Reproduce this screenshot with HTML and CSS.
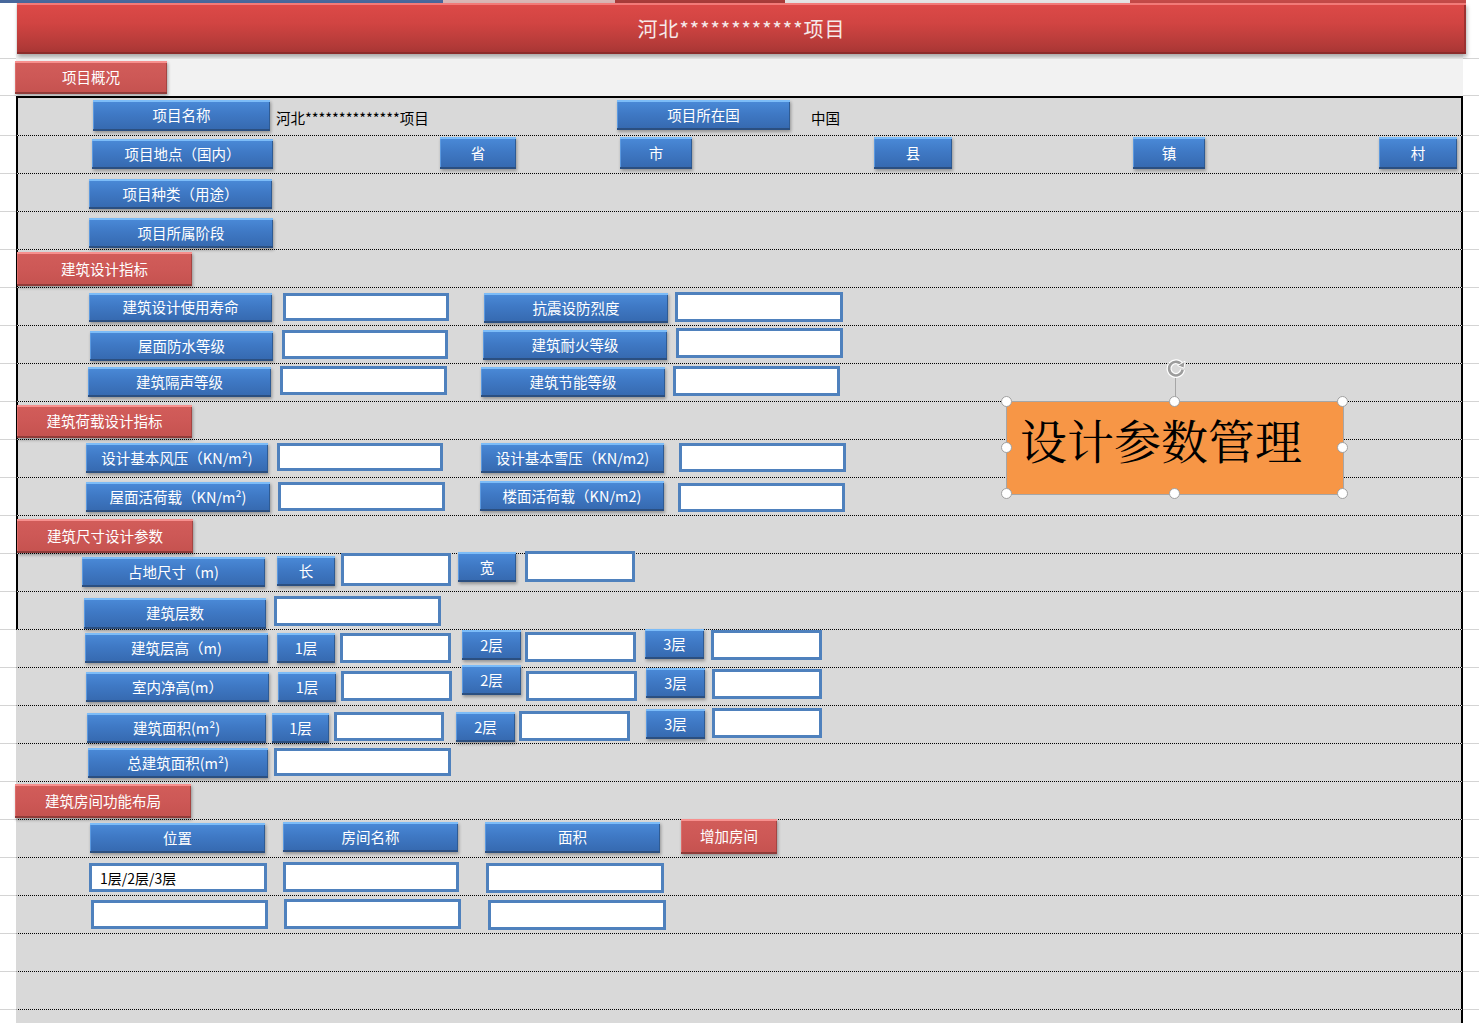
FILE: index.html
```html
<!DOCTYPE html>
<html lang="zh-CN">
<head>
<meta charset="utf-8">
<title>河北项目 设计参数</title>
<link rel="stylesheet" href="styles.css">
</head>
<body>
<div class="sheet">
  <div class="row hdr">
    <div class="cells">
      <div class="strip"></div>
      <div class="hdr-bar">河北************项目</div>
    </div>
  </div>
  <div class="row light r0">
    <div class="cells"><div class="sec">项目概况</div></div>
  </div>

  <div class="row framed first r1">
    <div class="cells">
      <div class="btn">项目名称</div>
      <div class="txt">河北**************项目</div>
      <div class="btn">项目所在国</div>
      <div class="txt">中国</div>
    </div>
  </div>
  <div class="row framed r2">
    <div class="cells">
      <div class="btn">项目地点（国内）</div>
      <div class="btn">省</div>
      <div class="btn">市</div>
      <div class="btn">县</div>
      <div class="btn">镇</div>
      <div class="btn">村</div>
    </div>
  </div>
  <div class="row framed r3"><div class="cells"><div class="btn">项目种类（用途）</div></div></div>
  <div class="row framed r4"><div class="cells"><div class="btn">项目所属阶段</div></div></div>
  <div class="row framed r5"><div class="cells"><div class="sec">建筑设计指标</div></div></div>
  <div class="row framed r6">
    <div class="cells">
      <div class="btn">建筑设计使用寿命</div><div class="inp"></div>
      <div class="btn">抗震设防烈度</div><div class="inp"></div>
    </div>
  </div>
  <div class="row framed r7">
    <div class="cells">
      <div class="btn">屋面防水等级</div><div class="inp"></div>
      <div class="btn">建筑耐火等级</div><div class="inp"></div>
    </div>
  </div>
  <div class="row framed r8">
    <div class="cells">
      <div class="btn">建筑隔声等级</div><div class="inp"></div>
      <div class="btn">建筑节能等级</div><div class="inp"></div>
    </div>
  </div>
  <div class="row framed r9"><div class="cells"><div class="sec">建筑荷载设计指标</div></div></div>
  <div class="row framed r10">
    <div class="cells">
      <div class="btn">设计基本风压（KN/m²)</div><div class="inp"></div>
      <div class="btn">设计基本雪压（KN/m2)</div><div class="inp"></div>
    </div>
  </div>
  <div class="row framed r11">
    <div class="cells">
      <div class="btn">屋面活荷载（KN/m²)</div><div class="inp"></div>
      <div class="btn">楼面活荷载（KN/m2)</div><div class="inp"></div>
    </div>
  </div>
  <div class="row framed r12"><div class="cells"><div class="sec">建筑尺寸设计参数</div></div></div>
  <div class="row framed r13">
    <div class="cells">
      <div class="btn">占地尺寸（m)</div>
      <div class="btn">长</div><div class="inp"></div>
      <div class="btn">宽</div><div class="inp"></div>
    </div>
  </div>
  <div class="row framed r14">
    <div class="cells"><div class="btn">建筑层数</div><div class="inp"></div></div>
  </div>
  <div class="row r15">
    <div class="cells">
      <div class="btn">建筑层高（m)</div>
      <div class="btn">1层</div><div class="inp"></div>
      <div class="btn">2层</div><div class="inp"></div>
      <div class="btn">3层</div><div class="inp"></div>
    </div>
  </div>
  <div class="row r16">
    <div class="cells">
      <div class="btn">室内净高(m）</div>
      <div class="btn">1层</div><div class="inp"></div>
      <div class="btn">2层</div><div class="inp"></div>
      <div class="btn">3层</div><div class="inp"></div>
    </div>
  </div>
  <div class="row r17">
    <div class="cells">
      <div class="btn">建筑面积(m²)</div>
      <div class="btn">1层</div><div class="inp"></div>
      <div class="btn">2层</div><div class="inp"></div>
      <div class="btn">3层</div><div class="inp"></div>
    </div>
  </div>
  <div class="row r18">
    <div class="cells"><div class="btn">总建筑面积(m²)</div><div class="inp"></div></div>
  </div>
  <div class="row r19"><div class="cells"><div class="sec">建筑房间功能布局</div></div></div>
  <div class="row r20">
    <div class="cells">
      <div class="btn">位置</div>
      <div class="btn">房间名称</div>
      <div class="btn">面积</div>
      <div class="sec">增加房间</div>
    </div>
  </div>
  <div class="row r21">
    <div class="cells">
      <div class="inp val">1层/2层/3层</div><div class="inp"></div><div class="inp"></div>
    </div>
  </div>
  <div class="row r22">
    <div class="cells">
      <div class="inp"></div><div class="inp"></div><div class="inp"></div>
    </div>
  </div>
  <div class="row"><div class="cells"></div></div>
  <div class="row"><div class="cells"></div></div>
  <div class="row"><div class="cells"></div></div>

  <div class="shape">
    <span class="shape-text">设计参数管理</span>
    <div class="rot-line"></div>
    <svg class="rot-icon" width="22" height="22" viewBox="0 0 22 22">
      <path d="M16.8 8.2 A6.8 6.8 0 1 0 17.6 12.8" fill="none" stroke="#fff" stroke-width="5"/>
      <path d="M16.8 8.2 A6.8 6.8 0 1 0 17.6 12.8" fill="none" stroke="#9c9c9c" stroke-width="2.6"/>
      <path d="M20 4.2 L19 11.2 L12.6 8.6 Z" fill="#9c9c9c" stroke="#fff" stroke-width="1"/>
    </svg>
    <i class="h h-tl"></i><i class="h h-tm"></i><i class="h h-tr"></i>
    <i class="h h-ml"></i><i class="h h-mr"></i>
    <i class="h h-bl"></i><i class="h h-bm"></i><i class="h h-br"></i>
  </div>
</div>
</body>
</html>
```

FILE: styles.css
```css
* { box-sizing: border-box; }
html, body { margin: 0; padding: 0; background: #fff; }
body {
  font-family: "Noto Sans CJK SC", "Microsoft YaHei", sans-serif;
  width: 1479px;
  height: 1023px;
  overflow: hidden;
}
.sheet { position: relative; width: 1479px; height: 1023px; overflow: hidden; }

/* grid rows */
.row {
  height: 38px;
  background: linear-gradient(to top, #d4d4d4 1px, #fff 1px);
}
.cells {
  margin-left: 16px;
  width: 1447px;
  height: 100%;
  display: flex;
  align-items: flex-start;
  background: #d9d9d9;
  border-left: 2px solid #d9d9d9;
  border-right: 2px solid #000;
  border-bottom: 1px dotted #000;
}
.row.framed .cells { border-left-color: #000; }
.row.first { height: 40px; }
.row.first .cells { border-top: 2px solid #000; }

.row.hdr { height: 59px; }
.row.hdr .cells { display: block; background: #f2f2f2; border: 0; }
.row.light { height: 37px; }
.row.light .cells { background: #f2f2f2; border: 0; }

.strip {
  height: 3px;
  margin-left: -16px;
  width: 1479px;
  background: linear-gradient(to right, #48689c 0 443px, #d9b7b6 443px 615px, #a83c3a 615px 785px, #e4e4e4 785px 1130px, #c44a48 1130px 1466px, #fff 1466px);
}
.hdr-bar {
  margin-left: 1px;
  width: 1449px;
  height: 51px;
  display: flex;
  align-items: center;
  justify-content: center;
  color: #f6eaea;
  font-size: 20px;
  letter-spacing: 1px;
  background: linear-gradient(#dd4a48, #d14442 40%, #b23a38 85%, #a53433);
  box-shadow: inset 0 2px 0 #f27a78, inset 0 -2px 0 #8c2c2b, inset -2px 0 0 #9c3231, 1px 3px 4px rgba(0,0,0,.3);
}

/* shapes */
.btn, .sec {
  flex: none;
  height: 30px;
  display: flex;
  align-items: center;
  justify-content: center;
  color: #fff;
  font-size: 14.5px;
  line-height: 1;
  white-space: nowrap;
}
.btn {
  background: linear-gradient(#4b8bd9, #3f79c5 45%, #3568ae);
  box-shadow: inset 0 2px 0 #7cbcf8, inset 0 -2px 0 #2b4f80, inset 1px 0 0 #5c99df, inset -1px 0 0 #2e5b94, 1px 2px 3px rgba(0,0,0,.32);
}
.sec {
  background: linear-gradient(#d25d5a, #cd5856 50%, #c5524f);
  box-shadow: inset 0 2px 0 #f7908e, inset 0 -2px 0 #8f3b39, inset 1px 0 0 #dc6d6a, inset -1px 0 0 #a54542, 1px 2px 3px rgba(0,0,0,.32);
}
.inp {
  flex: none;
  height: 29px;
  background: #fff;
  border: 3px solid #4f81bd;
}
.inp.val {
  display: flex;
  align-items: center;
  padding-left: 8px;
  font-size: 14px;
  color: #000;
}
.txt {
  flex: none;
  height: 30px;
  display: flex;
  align-items: center;
  font-size: 14.5px;
  color: #000;
  white-space: nowrap;
}

/* row placements */
.r0 .sec { margin: 2px 0 0 -1px; width: 152px; height: 33px; }

.r1 > .cells > :nth-child(1) { margin: 2px 0 0 75px; width: 177px; height: 31px; }
.r1 > .cells > :nth-child(2) { margin: 4px 0 0 6px; width: 341px; }
.r1 > .cells > :nth-child(3) { margin: 2px 0 0 0; width: 173px; }
.r1 > .cells > :nth-child(4) { margin: 4px 0 0 21px; }

.r2 > .cells > :nth-child(1) { margin: 3px 0 0 74px; width: 181px; }
.r2 > .cells > :nth-child(2) { margin: 1px 0 0 167px; width: 76px; height: 32px; }
.r2 > .cells > :nth-child(3) { margin: 1px 0 0 104px; width: 72px; height: 32px; }
.r2 > .cells > :nth-child(4) { margin: 1px 0 0 182px; width: 78px; height: 32px; }
.r2 > .cells > :nth-child(5) { margin: 1px 0 0 181px; width: 72px; height: 32px; }
.r2 > .cells > :nth-child(6) { margin: 1px 0 0 174px; width: 78px; height: 32px; }

.r3 .btn { margin: 5px 0 0 71px; width: 183px; }
.r4 .btn { margin: 6px 0 0 71px; width: 184px; }
.r5 .sec { margin: 2px 0 0 -1px; width: 175px; height: 34px; }

.r6 > .cells > :nth-child(1) { margin: 5px 0 0 71px; width: 183px; height: 29px; }
.r6 > .cells > :nth-child(2) { margin: 5px 0 0 11px; width: 166px; height: 28px; }
.r6 > .cells > :nth-child(3) { margin: 5px 0 0 35px; width: 184px; }
.r6 > .cells > :nth-child(4) { margin: 4px 0 0 7px; width: 168px; height: 30px; }

.r7 > .cells > :nth-child(1) { margin: 5px 0 0 72px; width: 183px; }
.r7 > .cells > :nth-child(2) { margin: 4px 0 0 9px; width: 166px; }
.r7 > .cells > :nth-child(3) { margin: 4px 0 0 35px; width: 184px; }
.r7 > .cells > :nth-child(4) { margin: 2px 0 0 9px; width: 167px; height: 30px; }

.r8 > .cells > :nth-child(1) { margin: 3px 0 0 70px; width: 183px; }
.r8 > .cells > :nth-child(2) { margin: 2px 0 0 9px; width: 167px; }
.r8 > .cells > :nth-child(3) { margin: 3px 0 0 34px; width: 184px; }
.r8 > .cells > :nth-child(4) { margin: 2px 0 0 8px; width: 167px; height: 30px; }

.r9 .sec { margin: 3px 0 0 -1px; width: 175px; height: 33px; }

.r10 > .cells > :nth-child(1) { margin: 3px 0 0 68px; width: 182px; }
.r10 > .cells > :nth-child(2) { margin: 3px 0 0 9px; width: 166px; height: 28px; }
.r10 > .cells > :nth-child(3) { margin: 3px 0 0 38px; width: 183px; }
.r10 > .cells > :nth-child(4) { margin: 3px 0 0 15px; width: 167px; }

.r11 > .cells > :nth-child(1) { margin: 4px 0 0 68px; width: 184px; }
.r11 > .cells > :nth-child(2) { margin: 4px 0 0 8px; width: 167px; }
.r11 > .cells > :nth-child(3) { margin: 3px 0 0 35px; width: 184px; }
.r11 > .cells > :nth-child(4) { margin: 5px 0 0 14px; width: 167px; }

.r12 .sec { margin: 3px 0 0 -1px; width: 176px; height: 34px; }

.r13 > .cells > :nth-child(1) { margin: 3px 0 0 64px; width: 183px; }
.r13 > .cells > :nth-child(2) { margin: 2px 0 0 12px; width: 58px; }
.r13 > .cells > :nth-child(3) { margin: -1px 0 0 6px; width: 110px; height: 33px; }
.r13 > .cells > :nth-child(4) { margin: -2px 0 0 7px; width: 58px; }
.r13 > .cells > :nth-child(5) { margin: -3px 0 0 9px; width: 110px; height: 31px; }

.r14 > .cells > :nth-child(1) { margin: 6px 0 0 66px; width: 182px; height: 31px; }
.r14 > .cells > :nth-child(2) { margin: 4px 0 0 8px; width: 167px; height: 30px; }

.r15 > .cells > :nth-child(1) { margin: 3px 0 0 67px; width: 183px; }
.r15 > .cells > :nth-child(2) { margin: 3px 0 0 9px; width: 58px; }
.r15 > .cells > :nth-child(3) { margin: 3px 0 0 5px; width: 111px; height: 30px; }
.r15 > .cells > :nth-child(4) { margin: 0 0 0 11px; width: 59px; }
.r15 > .cells > :nth-child(5) { margin: 2px 0 0 4px; width: 111px; height: 30px; }
.r15 > .cells > :nth-child(6) { margin: -1px 0 0 9px; width: 59px; }
.r15 > .cells > :nth-child(7) { margin: 0 0 0 7px; width: 111px; height: 30px; }

.r16 > .cells > :nth-child(1) { margin: 4px 0 0 68px; width: 183px; }
.r16 > .cells > :nth-child(2) { margin: 4px 0 0 9px; width: 58px; }
.r16 > .cells > :nth-child(3) { margin: 3px 0 0 5px; width: 111px; height: 30px; }
.r16 > .cells > :nth-child(4) { margin: -3px 0 0 10px; width: 59px; }
.r16 > .cells > :nth-child(5) { margin: 3px 0 0 5px; width: 111px; height: 30px; }
.r16 > .cells > :nth-child(6) { margin: 0 0 0 9px; width: 59px; }
.r16 > .cells > :nth-child(7) { margin: 1px 0 0 7px; width: 110px; height: 30px; }

.r17 > .cells > :nth-child(1) { margin: 7px 0 0 69px; width: 179px; }
.r17 > .cells > :nth-child(2) { margin: 7px 0 0 6px; width: 57px; }
.r17 > .cells > :nth-child(3) { margin: 6px 0 0 5px; width: 110px; }
.r17 > .cells > :nth-child(4) { margin: 6px 0 0 12px; width: 59px; }
.r17 > .cells > :nth-child(5) { margin: 5px 0 0 4px; width: 111px; height: 30px; }
.r17 > .cells > :nth-child(6) { margin: 3px 0 0 16px; width: 59px; }
.r17 > .cells > :nth-child(7) { margin: 2px 0 0 7px; width: 110px; height: 30px; }

.r18 > .cells > :nth-child(1) { margin: 4px 0 0 70px; width: 180px; }
.r18 > .cells > :nth-child(2) { margin: 4px 0 0 6px; width: 177px; height: 28px; }

.r19 .sec { margin: 2px 0 0 -3px; width: 176px; height: 34px; }

.r20 > .cells > :nth-child(1) { margin: 3px 0 0 72px; width: 175px; }
.r20 > .cells > :nth-child(2) { margin: 2px 0 0 18px; width: 175px; }
.r20 > .cells > :nth-child(3) { margin: 2px 0 0 27px; width: 175px; height: 31px; }
.r20 > .cells > :nth-child(4) { margin: -1px 0 0 21px; width: 96px; height: 35px; }

.r21 > .cells > :nth-child(1) { margin: 5px 0 0 71px; width: 178px; }
.r21 > .cells > :nth-child(2) { margin: 4px 0 0 16px; width: 176px; height: 30px; }
.r21 > .cells > :nth-child(3) { margin: 5px 0 0 27px; width: 178px; height: 30px; }

.r22 > .cells > :nth-child(1) { margin: 4px 0 0 73px; width: 177px; }
.r22 > .cells > :nth-child(2) { margin: 3px 0 0 16px; width: 177px; height: 30px; }
.r22 > .cells > :nth-child(3) { margin: 4px 0 0 27px; width: 178px; height: 30px; }

/* selected floating text box */
.shape {
  position: absolute;
  left: 1006px;
  top: 401px;
  width: 338px;
  height: 94px;
  background: #f79646;
  border: 1px solid #a6a6a6;
}
.shape-text {
  display: block;
  padding: 13px 0 0 13px;
  font-family: "Noto Serif CJK SC", "Noto Sans CJK SC", serif;
  font-size: 47px;
  line-height: 1;
  color: #000;
  white-space: nowrap;
}
.rot-line {
  position: absolute;
  left: 168px;
  top: -26px;
  width: 1px;
  height: 25px;
  background: #a6a6a6;
}
.rot-icon {
  position: absolute;
  left: 158px;
  top: -45px;
}
.h {
  position: absolute;
  width: 11px;
  height: 11px;
  margin: -6px 0 0 -6px;
  border-radius: 50%;
  background: #fff;
  border: 1.5px solid #a0a0a0;
}
.h-tl { left: 0; top: 0; }
.h-tm { left: 50%; top: 0; }
.h-tr { left: 100%; top: 0; }
.h-ml { left: 0; top: 50%; }
.h-mr { left: 100%; top: 50%; }
.h-bl { left: 0; top: 100%; }
.h-bm { left: 50%; top: 100%; }
.h-br { left: 100%; top: 100%; }
```
